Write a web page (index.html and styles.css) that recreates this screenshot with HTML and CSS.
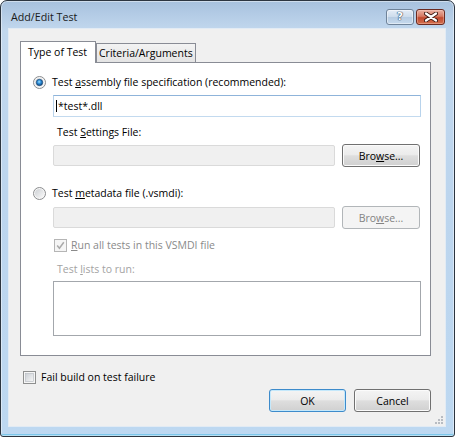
FILE: index.html
```html
<!DOCTYPE html>
<html>
<head>
<meta charset="utf-8">
<title>Add/Edit Test</title>
<link rel="stylesheet" href="styles.css">
</head>
<body>
<div class="window">
  <div class="titlebar">
    <span class="title">Add/Edit Test</span>
    <div class="caption">
      <span class="cap-btn help"><span class="q">?</span></span>
      <span class="cap-btn close">
        <svg width="14" height="10" viewBox="0 0 14 10">
          <path d="M2 1.5 L12 8.5 M12 1.5 L2 8.5" stroke="#3b1710" stroke-width="4" stroke-linecap="round"/>
          <path d="M2 1.5 L12 8.5 M12 1.5 L2 8.5" stroke="#ffffff" stroke-width="2.2" stroke-linecap="round"/>
        </svg>
      </span>
    </div>
  </div>
  <div class="client">
    <div class="tabs">
      <div class="tab active">Type of Test</div>
      <div class="tab inactive">Criteria/Arguments</div>
    </div>
    <div class="panel">
      <div class="opt">
        <svg class="radio" width="13" height="13" viewBox="0 0 13 13">
          <defs>
            <linearGradient id="rbg1" x1="0" y1="0" x2="1" y2="1"><stop offset="0" stop-color="#d6d8db"/><stop offset="1" stop-color="#fbfbfb"/></linearGradient>
            <radialGradient id="rdot" cx="45%" cy="40%" r="65%"><stop offset="0" stop-color="#9fe1ff"/><stop offset=".45" stop-color="#2a8ad6"/><stop offset="1" stop-color="#0b3a6c"/></radialGradient>
          </defs>
          <circle cx="6.5" cy="6.5" r="6" fill="#f7f7f7" stroke="#8a8c8e"/>
          <circle cx="6.5" cy="6.5" r="4.6" fill="url(#rbg1)"/>
          <circle cx="6.5" cy="6.5" r="3.2" fill="url(#rdot)" stroke="#1c4a78" stroke-width=".7"/>
        </svg>
        <span>Test <u>a</u>ssembly file specification (recommended):</span>
      </div>
      <div class="indent">
        <div class="textbox focused"><span class="caret"></span>*test*.dll</div>
        <div class="label">Test <u>S</u>ettings File:</div>
        <div class="field-row">
          <div class="textbox disabled"></div>
          <button class="btn browse">Bro<u>w</u>se...</button>
        </div>
      </div>
      <div class="opt opt2">
        <svg class="radio" width="13" height="13" viewBox="0 0 13 13">
          <defs>
            <linearGradient id="rbg2" x1="0" y1="0" x2="1" y2="1"><stop offset="0" stop-color="#cdd0d4"/><stop offset="1" stop-color="#fafafa"/></linearGradient>
          </defs>
          <circle cx="6.5" cy="6.5" r="6" fill="#f7f7f7" stroke="#8a8c8e"/>
          <circle cx="6.5" cy="6.5" r="4.6" fill="url(#rbg2)"/>
        </svg>
        <span>Test <u>m</u>etadata file (.vsmdi):</span>
      </div>
      <div class="indent">
        <div class="field-row row3">
          <div class="textbox disabled"></div>
          <button class="btn browse" disabled>Bro<u>w</u>se...</button>
        </div>
        <div class="check-row run">
          <svg class="checkbox" width="13" height="13" viewBox="0 0 13 13">
            <rect x=".5" y=".5" width="12" height="12" fill="#f5f5f5" stroke="#b5b5b5"/>
            <path d="M3.2 6.6 L5.4 9.2 L9.8 3.2" fill="none" stroke="#a9a9a9" stroke-width="1.5"/>
          </svg>
          <span class="dis"><u>R</u>un all tests in this VSMDI file</span>
        </div>
        <div class="label dis2">Test <u>l</u>ists to run:</div>
        <div class="listbox"></div>
      </div>
    </div>
    <div class="check-row fail">
      <svg class="checkbox" width="13" height="13" viewBox="0 0 13 13">
        <defs>
          <linearGradient id="cbg" x1="0" y1="0" x2="1" y2="1"><stop offset="0" stop-color="#cbcfd5"/><stop offset="1" stop-color="#f7f7f7"/></linearGradient>
        </defs>
        <rect x=".5" y=".5" width="12" height="12" fill="#f6f6f6" stroke="#8e8f8f"/>
        <rect x="2.5" y="2.5" width="8" height="8" fill="url(#cbg)" stroke="#b3b8be" stroke-width=".6"/>
      </svg>
      <span>Fail build on test failure</span>
    </div>
    <div class="actions">
      <button class="btn default">OK</button>
      <button class="btn">Cancel</button>
    </div>
    <svg class="grip" width="8" height="8" viewBox="0 0 8 8">
      <g fill="#b8bcc2">
        <rect x="6" y="0" width="2" height="2"/>
        <rect x="3" y="3" width="2" height="2"/><rect x="6" y="3" width="2" height="2"/>
        <rect x="0" y="6" width="2" height="2"/><rect x="3" y="6" width="2" height="2"/><rect x="6" y="6" width="2" height="2"/>
      </g>
    </svg>
  </div>
</div>
</body>
</html>
```
FILE: styles.css
```css
html, body {
  margin: 0;
  padding: 0;
  background: #ffffff;
}

body {
  font-family: "Open Sans", "Noto Sans", sans-serif;
  font-size: 10.5px;
  color: #000;
}

.window {
  width: 455px;
  height: 437px;
  box-sizing: border-box;
  border: 1px solid #2c3540;
  border-radius: 7px 7px 3px 3px;
  background: linear-gradient(180deg, #a7c1dd 0px, #b4cce6 14px, #c2d8ee 30px, #bcd5ee 200px, #bdd8f1 100%);
  box-shadow: inset 0 0 0 1px rgba(255, 255, 255, 0.45), inset 0 -2px 0 0 #7cc6ea;
  padding: 0 8px 9px 7px;
  display: flex;
  flex-direction: column;
}

.titlebar {
  height: 27px;
  flex: none;
  display: flex;
  justify-content: space-between;
  align-items: flex-start;
  padding: 0 1px 0 3px;
}

.title {
  margin-top: 8px;
  line-height: 16px;
  color: #1a1a1a;
  font-size: 10.7px;
}

.caption {
  display: flex;
  gap: 2px;
  margin-top: 8px;
}

.cap-btn {
  height: 16px;
  box-sizing: border-box;
  border-radius: 3px;
  display: flex;
  align-items: center;
  justify-content: center;
}

.help {
  width: 28px;
  border: 1px solid #6f8399;
  background: linear-gradient(180deg, #e4edf7 0%, #cddcec 48%, #b7cce2 52%, #c6daee 100%);
  box-shadow: inset 0 0 0 1px rgba(255, 255, 255, 0.45);
}

.q {
  font-family: "DejaVu Sans", sans-serif;
  font-weight: bold;
  font-size: 11px;
  line-height: 12px;
  color: #ffffff;
  text-shadow: 0 0 1px #2c4560, 0 0 1px #2c4560, 0 0 1px #2c4560;
}

.close {
  width: 29px;
  border: 1px solid #6b2a20;
  background: linear-gradient(180deg, #eab1a3 0%, #d67a64 45%, #c24a30 55%, #d2704f 100%);
  box-shadow: inset 0 0 0 1px rgba(255, 220, 210, 0.35);
}

.client {
  flex: 1;
  background: #f0f0f0;
  border: 1px solid #e2ebf4;
  padding: 12px 14px 0 11px;
  display: flex;
  flex-direction: column;
  position: relative;
}

.tabs {
  display: flex;
  align-items: flex-end;
  height: 22px;
  margin-bottom: -1px;
  flex: none;
}

.tab {
  box-sizing: border-box;
  border: 1px solid #898c95;
  border-bottom: none;
  line-height: 16px;
  white-space: nowrap;
}

.tab.active {
  width: 76px;
  height: 22px;
  background: #ffffff;
  padding: 2px 0 0 7px;
  position: relative;
  z-index: 1;
}

.tab.inactive {
  width: 100px;
  height: 20px;
  padding: 1px 0 0 2px;
  background: linear-gradient(180deg, #f3f3f3 0%, #ebebeb 50%, #e3e3e3 100%);
}

.panel {
  height: 294px;
  box-sizing: border-box;
  border: 1px solid #898c95;
  background: #ffffff;
  padding: 11px 9px 0 12px;
  display: flex;
  flex-direction: column;
  flex: none;
}

.opt {
  display: flex;
  align-items: center;
  gap: 6px;
  height: 16px;
  line-height: 16px;
  white-space: nowrap;
}

.radio {
  flex: none;
  display: block;
}

.opt2 {
  margin-top: 18px;
}

.indent {
  margin-left: 20px;
  display: flex;
  flex-direction: column;
}

.textbox {
  box-sizing: border-box;
  border: 1px solid #d9d9d9;
}

.textbox.focused {
  height: 22px;
  margin-top: 5px;
  border-color: #8fb4da #b8d3ec #c3daef #b8d3ec;
  background: #ffffff;
  padding-left: 2px;
  line-height: 18px;
  display: flex;
  align-items: center;
}

.caret {
  display: inline-block;
  width: 1px;
  height: 12px;
  background: #000;
  margin-right: 1px;
}

.label {
  margin-top: 7px;
  height: 16px;
  line-height: 16px;
  padding-left: 4px;
}

.field-row {
  display: flex;
  align-items: center;
  gap: 7px;
  height: 23px;
  margin-top: 4px;
  margin-right: 1px;
}

.row3 {
  margin-top: 5px;
}

.textbox.disabled {
  flex: 1;
  height: 21px;
  background: #f0f0f0;
  border-color: #dadada;
  border-radius: 2px;
}

.btn {
  height: 23px;
  box-sizing: border-box;
  border: 1px solid #707070;
  border-radius: 3px;
  background: linear-gradient(180deg, #f4f4f4 0%, #ececec 45%, #dedede 52%, #d0d0d0 100%);
  box-shadow: inset 0 0 0 1px #fbfbfb;
  font-family: inherit;
  font-size: inherit;
  line-height: 16px;
  color: #000;
  padding: 0;
  flex: none;
}

.browse {
  width: 78px;
}

.btn:disabled {
  border-color: #b2b6b9;
  background: #f4f4f4;
  box-shadow: none;
  color: #838383;
}

.check-row {
  display: flex;
  align-items: center;
  gap: 4px;
  height: 16px;
  line-height: 16px;
  white-space: nowrap;
}

.checkbox {
  flex: none;
  display: block;
}

.run {
  margin-top: 8px;
  margin-left: 1px;
}

.dis {
  color: #8a8a8a;
}

.label.dis2 {
  margin-top: 8px;
  color: #a3a3a3;
}

.listbox {
  margin-top: 4px;
  height: 55px;
  box-sizing: border-box;
  border: 1px solid #a3a7ac;
  background: #ffffff;
}

.fail {
  margin-top: 13px;
  margin-left: 3px;
  gap: 5px;
}

.actions {
  display: flex;
  justify-content: flex-end;
  gap: 8px;
  margin-top: 4px;
}

.actions .btn {
  width: 77px;
}

.btn.default {
  border-color: #3d8bcb;
  box-shadow: inset 0 0 0 1px #c4e8fb;
}

.grip {
  position: absolute;
  right: 2px;
  bottom: 2px;
}
```
